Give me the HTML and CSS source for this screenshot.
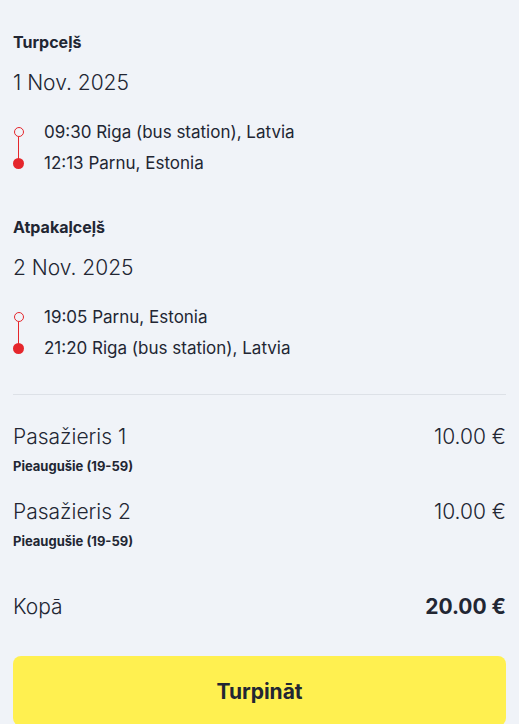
FILE: index.html
```html
<!DOCTYPE html>
<html lang="lv">
<head>
<meta charset="utf-8">
<link rel="stylesheet" href="styles.css">
</head>
<body>
<div class="page">
  <section class="trip">
    <h3 class="trip-title">Turpceļš</h3>
    <div class="trip-date">1 Nov. 2025</div>
    <div class="route">
      <div class="stop stop-from"><span class="dot dot-open"></span><span class="stop-text">09:30 Riga (bus station), Latvia</span></div>
      <div class="stop stop-to"><span class="dot dot-filled"></span><span class="stop-text">12:13 Parnu, Estonia</span></div>
    </div>
  </section>
  <section class="trip">
    <h3 class="trip-title">Atpakaļceļš</h3>
    <div class="trip-date">2 Nov. 2025</div>
    <div class="route">
      <div class="stop stop-from"><span class="dot dot-open"></span><span class="stop-text">19:05 Parnu, Estonia</span></div>
      <div class="stop stop-to"><span class="dot dot-filled"></span><span class="stop-text">21:20 Riga (bus station), Latvia</span></div>
    </div>
  </section>
  <hr class="divider">
  <div class="passengers">
    <div class="passenger">
      <div class="row"><span class="p-name">Pasažieris 1</span><span class="p-price">10.00 €</span></div>
      <div class="p-type">Pieaugušie (19-59)</div>
    </div>
    <div class="passenger">
      <div class="row"><span class="p-name">Pasažieris 2</span><span class="p-price">10.00 €</span></div>
      <div class="p-type">Pieaugušie (19-59)</div>
    </div>
  </div>
  <div class="total row"><span class="total-label">Kopā</span><span class="total-price">20.00 €</span></div>
  <button class="continue">Turpināt</button>
</div>
</body>
</html>
```
FILE: styles.css
```css
* { box-sizing: border-box; }
html, body { margin: 0; padding: 0; }
body {
  background: #f0f3f8;
  color: #222633;
  font-family: "Inter", "Noto Sans", sans-serif;
}
.page {
  padding: 32px 13px 0 13px;
}
.trip { margin-bottom: 44px; }
.trip:nth-of-type(2) { margin-bottom: 0; }
.trip-title {
  margin: 0;
  font-size: 16px;
  font-weight: 700;
  line-height: 20px;
}
.trip-date {
  margin-top: 18px;
  font-size: 21px;
  font-weight: 300;
  line-height: 26px;
}
.route {
  margin-top: 26px;
  display: flex;
  flex-direction: column;
  gap: 11px;
}
.stop {
  display: flex;
  align-items: center;
  height: 20px;
  font-size: 17px;
  font-weight: 400;
  line-height: 20px;
}
.stop-text { margin-left: 20px; }
.dot {
  position: relative;
  width: 11px;
  height: 11px;
  flex: none;
  border-radius: 50%;
}
.dot-open {
  border: 1.2px solid #e5262c;
  width: 10px;
  height: 10px;
  margin-left: 0.5px;
  margin-right: 0.5px;
}
.dot-open::after {
  content: "";
  position: absolute;
  left: 50%;
  top: 9px;
  width: 1.2px;
  margin-left: -0.6px;
  height: 22px;
  background: #e5262c;
}
.dot-filled { background: #e5262c; }
.divider {
  border: none;
  border-top: 1px solid #dde1e7;
  margin: 36px 0 0 0;
}
.row {
  display: flex;
  justify-content: space-between;
  align-items: baseline;
}
.passengers { margin-top: 28px; }
.passenger { margin-bottom: 24px; }
.p-name, .p-price {
  font-size: 21px;
  line-height: 28px;
  font-weight: 300;
}
.p-type {
  margin-top: 7px;
  font-size: 13px;
  font-weight: 700;
  line-height: 16px;
}
.total { margin-top: 44px; }
.total-label { font-size: 21px; line-height: 28px; font-weight: 300; }
.total-price { font-size: 21px; font-weight: 700; line-height: 28px; }
.continue {
  display: block;
  width: 100%;
  margin-top: 35px;
  height: 70px;
  border: none;
  border-radius: 8px;
  background: #fff050;
  color: #222633;
  font-family: inherit;
  font-size: 21px;
  font-weight: 700;
}
```
